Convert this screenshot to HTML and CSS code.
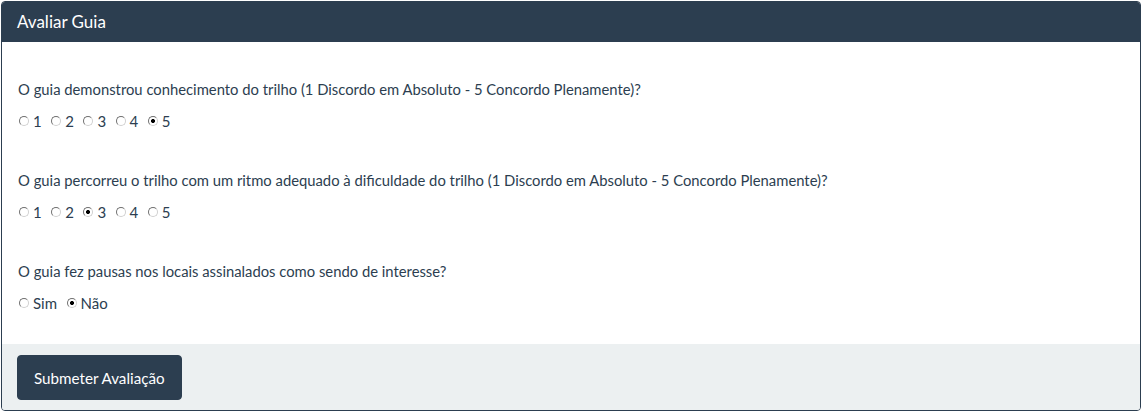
FILE: index.html
```html
<!DOCTYPE html>
<html lang="pt">
<head>
<meta charset="utf-8">
<title>Avaliar Guia</title>
<link rel="stylesheet" href="styles.css">
</head>
<body>
<div class="panel">
  <div class="panel-heading">Avaliar Guia</div>
  <div class="panel-body">
    <div class="group">
      <p class="question">O guia demonstrou conhecimento do trilho (1 Discordo em Absoluto - 5 Concordo Plenamente)?</p>
      <div class="options">
        <label class="opt"><input type="radio" name="q1">1</label>
        <label class="opt"><input type="radio" name="q1">2</label>
        <label class="opt"><input type="radio" name="q1">3</label>
        <label class="opt"><input type="radio" name="q1">4</label>
        <label class="opt"><input type="radio" name="q1" checked>5</label>
      </div>
    </div>
    <div class="group">
      <p class="question">O guia percorreu o trilho com um ritmo adequado à dificuldade do trilho (1 Discordo em Absoluto - 5 Concordo Plenamente)?</p>
      <div class="options">
        <label class="opt"><input type="radio" name="q2">1</label>
        <label class="opt"><input type="radio" name="q2">2</label>
        <label class="opt"><input type="radio" name="q2" checked>3</label>
        <label class="opt"><input type="radio" name="q2">4</label>
        <label class="opt"><input type="radio" name="q2">5</label>
      </div>
    </div>
    <div class="group">
      <p class="question">O guia fez pausas nos locais assinalados como sendo de interesse?</p>
      <div class="options">
        <label class="opt"><input type="radio" name="q3">Sim</label>
        <label class="opt"><input type="radio" name="q3" checked>Não</label>
      </div>
    </div>
  </div>
  <div class="panel-footer">
    <button class="btn" type="button">Submeter Avaliação</button>
  </div>
</div>
</body>
</html>
```
FILE: styles.css
```css
* { box-sizing: border-box; }
html, body { margin: 0; padding: 0; background: #fff; }
body {
  font-family: Lato, "Open Sans", sans-serif;
  font-size: 15px;
  color: #2c3e50;
  padding: 1px;
  width: 1142px;
}
.panel {
  border: 1px solid #2c3e50;
  border-radius: 4px;
  overflow: hidden;
  width: 1140px;
}
.panel-heading {
  background: #2c3e50;
  color: #fff;
  font-size: 17px;
  height: 40px;
  line-height: 40px;
  padding: 0 15px;
}
.panel-body {
  padding: 37px 16px 31px;
  display: flex;
  flex-direction: column;
  gap: 39px;
}
.group {
  display: flex;
  flex-direction: column;
  gap: 12px;
}
.question {
  margin: 0;
  line-height: 20px;
  font-size: 14.8px;
}
.options {
  display: flex;
  gap: 8.5px;
  line-height: 20px;
  font-size: 15px;
}
.opt {
  display: flex;
  align-items: center;
  gap: 4px;
}
.opt input {
  appearance: none;
  -webkit-appearance: none;
  width: 10px;
  height: 10px;
  margin: 0 0 0 1px;
  border-radius: 50%;
  border: 1px solid;
  border-color: #6f6f6f #d0d0d0 #d0d0d0 #6f6f6f;
  background: #fff;
}
.opt input:checked {
  background: radial-gradient(circle, #000 0 1.7px, #fff 2.3px);
}
.panel-footer {
  background: #ecf0f1;
  padding: 11px 15px 10px;
}
.btn {
  font-family: Lato, "Open Sans", sans-serif;
  font-size: 15.2px;
  color: #fff;
  background: #2c3e50;
  border: 1px solid #2c3e50;
  border-radius: 4px;
  height: 45px;
  padding: 0 16px;
  cursor: pointer;
}
```
